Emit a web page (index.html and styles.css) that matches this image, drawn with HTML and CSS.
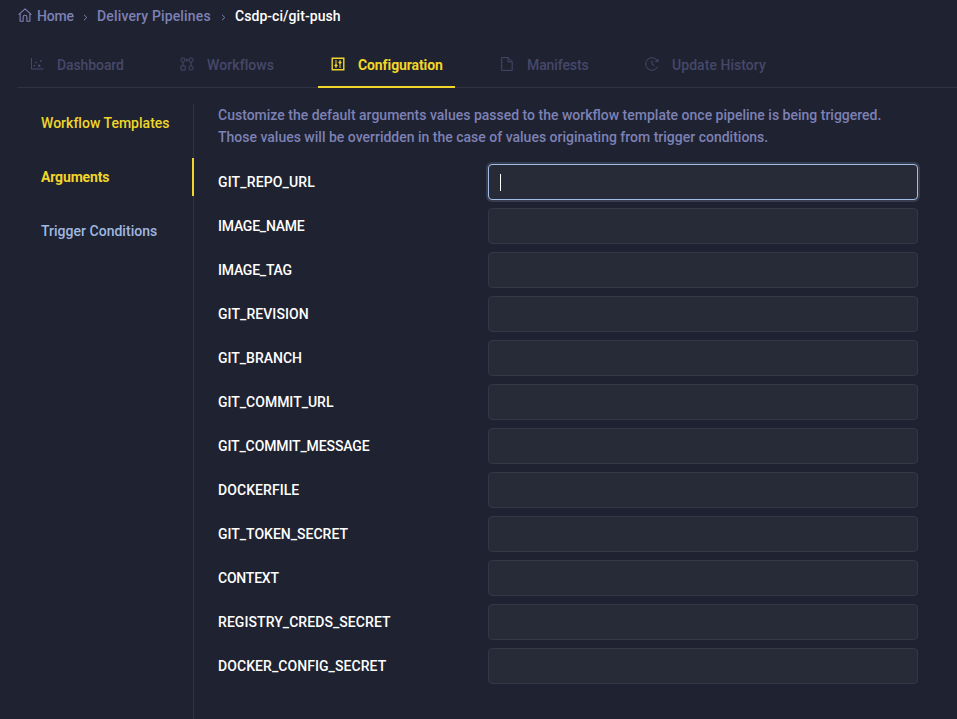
FILE: index.html
```html
<!DOCTYPE html>
<html lang="en">
<head>
<meta charset="utf-8">
<title>Csdp-ci/git-push</title>
<link rel="stylesheet" href="styles.css">
</head>
<body>
<nav class="crumbs">
  <svg class="home" width="14" height="14" viewBox="0 0 14 14"><path d="M.6 6.6 7 .9l6.400 5.700M2.100 5.500v7.800h3V9.200a1.900 1.900 0 0 1 3.800 0v4.100h3V5.500"/></svg>
  <a class="crumb crumb-home">Home</a><svg class="sep" width="5" height="7" viewBox="0 0 5 7"><path d="M1 .8 3.800 3.500 1 6.200"/></svg>
  <a class="crumb crumb-pipelines">Delivery Pipelines</a><svg class="sep" width="5" height="7" viewBox="0 0 5 7"><path d="M1 .8 3.800 3.500 1 6.200"/></svg>
  <span class="crumb current">Csdp-ci/git-push</span>
</nav>
<div class="tabs">
  <a class="tab t-dashboard"><svg width="14" height="14" viewBox="0 0 14 14"><path d="M1.500 1v11h12"/><g class="dots"><circle cx="4.500" cy="8.700" r=".9"/><circle cx="6" cy="5.500" r=".9"/><circle cx="9.200" cy="8.700" r="1.300"/><circle cx="10.800" cy="4" r=".9"/></g></svg><span>Dashboard</span></a>
  <a class="tab t-workflows"><svg width="14" height="14" viewBox="0 0 14 14"><circle cx="3" cy="3" r="2.100"/><circle cx="11" cy="3" r="2.100"/><circle cx="11" cy="11" r="2.100"/><path d="M1 8.900h4.200v4.200H1zM3.100 5.100v3.800M11 5.100v3.800M5.100 3h3.800M6.200 1.800 7.500 3 6.200 4.200"/></svg><span>Workflows</span></a>
  <a class="tab t-config active"><svg width="14" height="14" viewBox="0 0 14 14"><path class="frame" d="M1.200 1.200h11.600v11.600H1.200z"/><path d="M5 3v8M9 3v8M3.500 8.500h3M7.500 5.500h3"/><g class="dots"><circle cx="5" cy="8.500" r="1.300"/><circle cx="9" cy="5.500" r="1.300"/></g></svg><span>Configuration</span></a>
  <a class="tab t-manifests"><svg width="14" height="14" viewBox="0 0 14 14"><path d="M1.700.6h6.500l4 4v8.800H1.700zM8 .6v4.200h4.200"/></svg><span>Manifests</span></a>
  <a class="tab t-history"><svg width="14" height="14" viewBox="0 0 14 14"><path d="M12.600 4.300A6.300 6.300 0 1 0 12.600 9.700M13 1.800v2.700h-2.700M7 3.500v3.800l2.300 1.300"/></svg><span>Update History</span></a>
</div>
<div class="main">
  <aside class="side">
    <a class="side-item lit templates">Workflow Templates</a>
    <a class="side-item lit chosen">Arguments</a>
    <a class="side-item conditions">Trigger Conditions</a>
  </aside>
  <section class="content">
    <p class="intro">Customize the default arguments values passed to the workflow template once pipeline is being triggered.<br>Those values will be overridden in the case of values originating from trigger conditions.</p>
    <div class="row"><label class="wide">GIT_REPO_URL</label><div class="field focused"><i class="caret"></i></div></div>
    <div class="row"><label class="tight">IMAGE_NAME</label><div class="field"></div></div>
    <div class="row"><label class="tight">IMAGE_TAG</label><div class="field"></div></div>
    <div class="row"><label class="loose">GIT_REVISION</label><div class="field"></div></div>
    <div class="row"><label>GIT_BRANCH</label><div class="field"></div></div>
    <div class="row"><label>GIT_COMMIT_URL</label><div class="field"></div></div>
    <div class="row"><label class="snug">GIT_COMMIT_MESSAGE</label><div class="field"></div></div>
    <div class="row"><label class="loose">DOCKERFILE</label><div class="field"></div></div>
    <div class="row"><label>GIT_TOKEN_SECRET</label><div class="field"></div></div>
    <div class="row"><label class="tight">CONTEXT</label><div class="field"></div></div>
    <div class="row"><label class="loose">REGISTRY_CREDS_SECRET</label><div class="field"></div></div>
    <div class="row"><label class="loose">DOCKER_CONFIG_SECRET</label><div class="field"></div></div>
  </section>
</div>
</body>
</html>
```
FILE: styles.css
```css
* { box-sizing: border-box; }
body {
  margin: 0;
  height: 719px;
  overflow: hidden;
  display: flex;
  flex-direction: column;
  background: #1f2230;
  color: #fff;
  font: 500 14px/22px Roboto, sans-serif;
  white-space: nowrap;
}
svg { flex: none; fill: none; stroke: currentColor; stroke-width: 1; }
.dots { fill: currentColor; stroke: none; }

.crumbs { display: flex; align-items: center; height: 33px; padding: 0 0 2px 18px; color: #7d81b5; }
.home { margin: -1px 5px 0 0; stroke-width: 1.1; }
.crumb-home { width: 46px; letter-spacing: -.2px; }
.crumb-pipelines { width: 124px; letter-spacing: .15px; }
.sep { margin: 4px 9px 0 0; }
.current { color: #fff; letter-spacing: .05px; }

.tabs { display: flex; height: 55px; margin-left: 17px; border-bottom: 1px solid #303341; }
.tab { display: flex; align-items: center; height: 55px; padding: 10px 13px 0; color: #46486a; border-bottom: 2px solid transparent; }
.tab svg { margin: -2px 13px 0 0; }
.t-dashboard { width: 150px; letter-spacing: -.1px; }
.t-workflows { width: 151px; letter-spacing: .08px; }
.t-config { width: 137px; }
.t-manifests { width: 145px; margin-left: 32px; letter-spacing: -.1px; }
.t-history { letter-spacing: .05px; }
.tab.active { color: #f0d62b; border-color: #f0d62b; font-weight: 700; letter-spacing: -.1px; }
.frame { stroke-width: 1.4; }

.main { display: flex; flex: 1; padding-top: 16px; }
.side { display: flex; flex-direction: column; gap: 16px; width: 194px; border-right: 1px solid #303341; }
.side-item { height: 38px; padding-left: 41px; line-height: 38px; color: #9fb8e0; letter-spacing: .02px; }
.lit { color: #f0d62b; }
.chosen { margin-right: -1px; border-right: 2px solid #f0d62b; font-weight: 700; letter-spacing: -.15px; }

.content { flex: 1; padding-left: 24px; }
.intro { margin: 0 0 16px; color: #7d81b5; }
.row { display: flex; align-items: center; height: 36px; margin-bottom: 8px; }
.row label { width: 270px; }
.wide { letter-spacing: .15px; }
.loose { letter-spacing: .07px; }
.snug { letter-spacing: -.12px; }
.tight { letter-spacing: -.22px; }
.field { display: flex; align-items: center; width: 430px; height: 36px; padding-left: 11px; border: 1px solid #343744; border-radius: 4px; background: #272a37; }
.focused { border-color: #a3bce5; box-shadow: 0 0 0 2px #363c4e; }
.caret { width: 1px; height: 17px; background: #fff; }
```
